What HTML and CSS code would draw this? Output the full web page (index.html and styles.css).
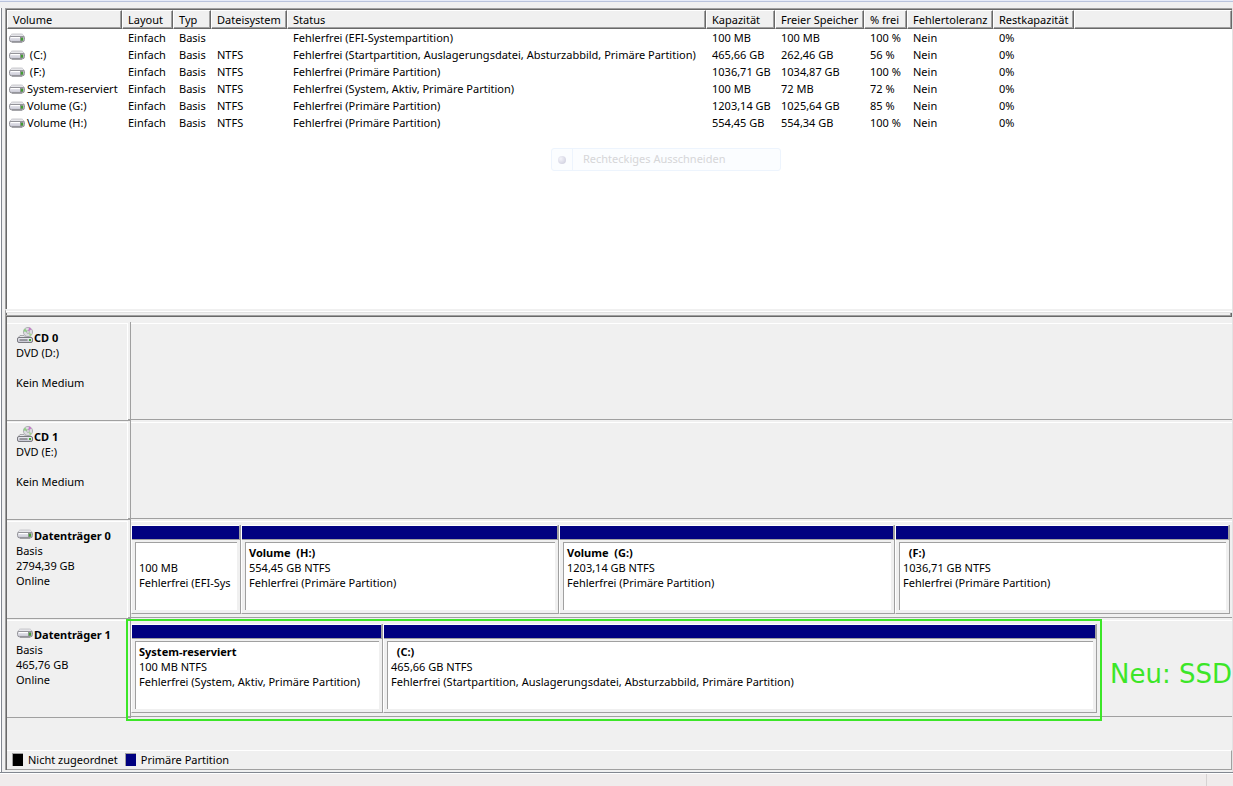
FILE: index.html
```html
<!DOCTYPE html>
<html lang="de">
<head>
<meta charset="utf-8">
<title>Datenträgerverwaltung</title>
<link rel="stylesheet" href="styles.css">
</head>
<body>
<svg class="defs" aria-hidden="true">
  <defs>
    <linearGradient id="face" x1="0" y1="0" x2="0" y2="1">
      <stop offset="0" stop-color="#eeeef4"/>
      <stop offset="1" stop-color="#c4c4d0"/>
    </linearGradient>
    <symbol id="drive" viewBox="0 0 16 10">
      <path d="M3.500 1h9q1 0 1.700 1L15.500 4H.5L1.800 2q.7-1 1.700-1z" fill="#e6e6ea" stroke="#bcbcc2" stroke-width=".8"/>
      <path d="M.5 4.500Q.5 3.500 2 3.500h12q1.500 0 1.500 1v2q0 2.500-2.500 2.500H3Q.5 9 .5 6.500z" fill="url(#face)" stroke="#8a8a90" stroke-width=".9"/>
      <path d="M2 4.500h9" stroke="#fff"/>
      <path d="M3 9h10" stroke="#6e6e74" stroke-width=".8"/>
      <rect x="11" y="4" width="3.500" height="4" fill="#8a948a"/>
      <rect x="12" y="5" width="2" height="2.500" fill="#3f9f30"/>
    </symbol>
    <symbol id="disc" viewBox="0 0 16 16">
      <circle cx="11" cy="5" r="4.600" fill="#dcdce0" stroke="#a2a2a8" stroke-width=".8"/>
      <path d="M11 5 8 1.500a4.500 4.500 0 0 0-1.500 3z" fill="#8fcf84"/>
      <path d="M11 5l1-4.400a4.500 4.500 0 0 1 2.500 1.600z" fill="#c678ca"/>
      <path d="M11 5l4 2.500a4.500 4.500 0 0 1-2 1.800z" fill="#a8d894"/>
      <circle cx="11" cy="5" r="1.300" fill="#fff" stroke="#8c8c92" stroke-width=".7"/>
      <path d="M3 8.500h4l1.500 1.500h5l2 1.500H.5z" fill="#e4e4e8" stroke="#9a9aa0" stroke-width=".8"/>
      <rect x=".5" y="10.500" width="15" height="5" rx="1.500" fill="url(#face)" stroke="#7a7a80"/>
      <path d="M2.500 13h8" stroke="#55555a"/>
      <rect x="12" y="12" width="2" height="2" fill="#3fae2f"/>
    </symbol>
  </defs>
</svg>

<main class="window">
  <section class="volumes">
    <table class="list">
      <colgroup>
        <col class="c-volume"><col class="c-layout"><col class="c-type"><col class="c-fs"><col class="c-status">
        <col class="c-size"><col class="c-free"><col class="c-pct"><col class="c-fault"><col class="c-rest"><col>
      </colgroup>
      <thead>
        <tr><th>Volume</th><th>Layout</th><th>Typ</th><th>Dateisystem</th><th>Status</th><th>Kapazität</th><th>Freier Speicher</th><th>% frei</th><th>Fehlertoleranz</th><th>Restkapazität</th><th></th></tr>
      </thead>
      <tbody>
        <tr><td><span class="name"><svg class="drive"><use href="#drive"/></svg></span></td><td>Einfach</td><td>Basis</td><td></td><td>Fehlerfrei (EFI-Systempartition)</td><td>100 MB</td><td>100 MB</td><td>100 %</td><td>Nein</td><td>0%</td><td></td></tr>
        <tr><td><span class="name"><svg class="drive"><use href="#drive"/></svg>&nbsp;(C:)</span></td><td>Einfach</td><td>Basis</td><td>NTFS</td><td>Fehlerfrei (Startpartition, Auslagerungsdatei, Absturzabbild, Primäre Partition)</td><td>465,66 GB</td><td>262,46 GB</td><td>56 %</td><td>Nein</td><td>0%</td><td></td></tr>
        <tr><td><span class="name"><svg class="drive"><use href="#drive"/></svg>&nbsp;(F:)</span></td><td>Einfach</td><td>Basis</td><td>NTFS</td><td>Fehlerfrei (Primäre Partition)</td><td>1036,71 GB</td><td>1034,87 GB</td><td>100 %</td><td>Nein</td><td>0%</td><td></td></tr>
        <tr><td><span class="name"><svg class="drive"><use href="#drive"/></svg>System-reserviert</span></td><td>Einfach</td><td>Basis</td><td>NTFS</td><td>Fehlerfrei (System, Aktiv, Primäre Partition)</td><td>100 MB</td><td>72 MB</td><td>72 %</td><td>Nein</td><td>0%</td><td></td></tr>
        <tr><td><span class="name"><svg class="drive"><use href="#drive"/></svg>Volume (G:)</span></td><td>Einfach</td><td>Basis</td><td>NTFS</td><td>Fehlerfrei (Primäre Partition)</td><td>1203,14 GB</td><td>1025,64 GB</td><td>85 %</td><td>Nein</td><td>0%</td><td></td></tr>
        <tr><td><span class="name"><svg class="drive"><use href="#drive"/></svg>Volume (H:)</span></td><td>Einfach</td><td>Basis</td><td>NTFS</td><td>Fehlerfrei (Primäre Partition)</td><td>554,45 GB</td><td>554,34 GB</td><td>100 %</td><td>Nein</td><td>0%</td><td></td></tr>
      </tbody>
    </table>
    <button class="snip" type="button"><span class="snip-mark"><span class="dot"></span></span><span class="snip-text">Rechteckiges Ausschneiden</span></button>
  </section>

  <div class="splitter"></div>

  <section class="disks">
    <article class="disk">
      <div class="info"><h2><svg class="disc"><use href="#disc"/></svg>CD 0</h2><p>DVD (D:)</p><p>&nbsp;</p><p>Kein Medium</p></div>
      <div class="graph"></div>
    </article>
    <article class="disk">
      <div class="info"><h2><svg class="disc"><use href="#disc"/></svg>CD 1</h2><p>DVD (E:)</p><p>&nbsp;</p><p>Kein Medium</p></div>
      <div class="graph"></div>
    </article>
    <article class="disk">
      <div class="info"><h2><svg class="drive"><use href="#drive"/></svg>Datenträger 0</h2><p>Basis</p><p>2794,39 GB</p><p>Online</p></div>
      <div class="graph parts-four">
        <div class="part"><div class="bar"></div><div class="box"><h3>&nbsp;</h3><p>100 MB</p><p>Fehlerfrei (EFI-Sys</p></div></div>
        <div class="part"><div class="bar"></div><div class="box"><h3>Volume&nbsp; (H:)</h3><p>554,45 GB NTFS</p><p>Fehlerfrei (Primäre Partition)</p></div></div>
        <div class="part"><div class="bar"></div><div class="box"><h3>Volume&nbsp; (G:)</h3><p>1203,14 GB NTFS</p><p>Fehlerfrei (Primäre Partition)</p></div></div>
        <div class="part"><div class="bar"></div><div class="box"><h3>&nbsp;&nbsp;(F:)</h3><p>1036,71 GB NTFS</p><p>Fehlerfrei (Primäre Partition)</p></div></div>
      </div>
    </article>
    <article class="disk">
      <div class="info"><h2><svg class="drive"><use href="#drive"/></svg>Datenträger 1</h2><p>Basis</p><p>465,76 GB</p><p>Online</p></div>
      <div class="graph parts-two">
        <div class="part"><div class="bar"></div><div class="box"><h3>System-reserviert</h3><p>100 MB NTFS</p><p>Fehlerfrei (System, Aktiv, Primäre Partition)</p></div></div>
        <div class="part"><div class="bar"></div><div class="box"><h3>&nbsp;&nbsp;(C:)</h3><p>465,66 GB NTFS</p><p>Fehlerfrei (Startpartition, Auslagerungsdatei, Absturzabbild, Primäre Partition)</p></div></div>
        <div class="note">Neu: SSD</div>
        <div class="marker"></div>
      </div>
    </article>
  </section>

  <footer class="legend">
    <span class="key"><i class="swatch black"></i>Nicht zugeordnet</span>
    <span class="key"><i class="swatch navy"></i>Primäre Partition</span>
  </footer>
</main>
<div class="status"><div class="grip"></div></div>
</body>
</html>
```
FILE: styles.css
```css
* { box-sizing: border-box; }

body {
  margin: 0;
  min-height: 100vh;
  display: flex;
  flex-direction: column;
  background: #f0f0f0;
  border-top: 1px solid #e6ebf8;
  color: #000;
  font: 11px/15px "Noto Sans", "Open Sans", sans-serif;
}

h2, h3, p { margin: 0; font-size: 11px; line-height: 15px; white-space: nowrap; }
h2, h3 { font-weight: 700; }
.defs { position: absolute; width: 0; height: 0; }
.drive { width: 16px; height: 10px; flex: none; }
.disc { width: 16px; height: 16px; flex: none; }

/* window frame */
.window {
  flex: 1;
  display: flex;
  flex-direction: column;
  padding: 7px 1px 2px 5px;
  background:
    linear-gradient(#b9c3dc, #b9c3dc) top / 100% 1px no-repeat,
    linear-gradient(#828790, #828790) 1px 7px / 1px 100% no-repeat,
    linear-gradient(#fff, #fff) 0 7px / 1px 100% no-repeat,
    linear-gradient(#e3e3e3, #e3e3e3) 100% 7px / 1px 100% no-repeat,
    #f0f0f0;
  border-bottom: 1px solid #828790;
}

/* volume list */
.volumes {
  flex: 1;
  position: relative;
  background: #fff;
  border-top: 1px solid #a0a0a0;
  border-left: 1px solid #a0a0a0;
  box-shadow: inset 1px 1px #696969;
  padding: 1px 0 0 1px;
}
.list { width: 100%; table-layout: fixed; border-collapse: separate; border-spacing: 0; }
.c-volume { width: 115px; }
.c-layout { width: 51px; }
.c-type { width: 38px; }
.c-fs { width: 76px; }
.c-status { width: 419px; }
.c-size { width: 69px; }
.c-free { width: 89px; }
.c-pct { width: 43px; }
.c-fault { width: 86px; }
.c-rest { width: 81px; }
.list th {
  height: 19px;
  padding: 0 0 1px 5px;
  text-align: left;
  font-weight: 400;
  line-height: 15px;
  white-space: nowrap;
  background: #f0f0f0;
  border: solid #696969;
  border-width: 1px;
  border-top-color: #fff;
  border-left-color: #fff;
  box-shadow: inset -1px -1px #a0a0a0;
}
.list td { height: 17px; padding: 0 0 0 6px; line-height: 17px; white-space: nowrap; }
.list td:first-child { padding-left: 2px; }
.name { display: flex; align-items: center; gap: 2px; height: 17px; }

/* capture menu entry fading out over the list */
.snip {
  position: absolute;
  left: 545px;
  top: 139px;
  width: 230px;
  height: 23px;
  display: flex;
  padding: 0;
  border: 1px solid #edf4fd;
  border-radius: 3px;
  background: #fbfdff;
  font: inherit;
  color: #d6d6d8;
}
.snip-mark { width: 21px; height: 100%; display: grid; place-items: center; border-right: 1px solid #edf4fd; }
.dot { width: 8px; height: 8px; border-radius: 50%; background: radial-gradient(circle at 35% 35%, #f4f4fa, #c9c9da); }
.snip-text { padding-left: 10px; line-height: 20px; }

.splitter {
  height: 8px;
  border-top: 2px solid #f0f0f0;
  border-left: 1px solid #a0a0a0;
  background: #f0f0f0;
  box-shadow: inset 0 1px #fff, inset 0 2px #e3e3e3, inset -1px -1px #696969, inset -2px -2px #a0a0a0, inset 1px 0 #696969;
}

/* graphical view */
.disks {
  border-left: 1px solid #a0a0a0;
  box-shadow: inset 1px 0 #696969;
  padding: 5px 0 32px 1px;
}
.disk { display: grid; grid-template-columns: 124px minmax(0, 1fr); height: 99px; }
.info {
  padding: 8px 0 0 9px;
  border-bottom: 1px solid #a0a0a0;
  background:
    linear-gradient(#fff, #fff) 0 1px / 121px 1px no-repeat,
    linear-gradient(#fff, #fff) 120px 1px / 1px 100% no-repeat,
    linear-gradient(#a0a0a0, #a0a0a0) 120px 100% / 4px 1px no-repeat,
    linear-gradient(#a0a0a0, #a0a0a0) 123px 0 / 1px 100% no-repeat;
}
.info h2 { display: flex; height: 15px; align-items: center; gap: 1px; padding-left: 1px; }
.info .disc { align-self: flex-end; margin-bottom: 2px; }
.info .drive { margin-bottom: 4px; }
.graph {
  position: relative;
  display: grid;
  padding: 5px 2px 3px 0;
  border-bottom: 1px solid #a0a0a0;
  margin-bottom: 1px;
  background: linear-gradient(#fff, #fff) 0 1px / 100% 1px no-repeat;
}
.parts-four { grid-template-columns: 110fr 318fr 336fr 335fr; }
.parts-two { grid-template-columns: 252fr 714fr 133fr; }
.part {
  min-width: 0;
  height: 89px;
  display: flex;
  flex-direction: column;
  border-left: 1px solid #fff;
  border-right: 1px solid #a0a0a0;
  border-bottom: 1px solid #a0a0a0;
}
.bar { height: 15px; background: #000080; border-top: 1px solid #fff; border-right: 1px solid #a0a0a0; border-bottom: 1px solid #a0a0a0; }
.box {
  flex: 1;
  margin: 2px 3px 3px;
  padding: 2px 0 0 3px;
  overflow: hidden;
  background: #fff;
  border-top: 1px solid #a0a0a0;
  border-left: 1px solid #a0a0a0;
}
.note {
  align-self: center;
  min-width: 0;
  padding: 10px 0 0 13px;
  white-space: nowrap;
  color: #3ce628;
  font: 26px/30px "DejaVu Sans", sans-serif;
}
.marker {
  position: absolute;
  top: 0;
  bottom: -5px;
  left: -5px;
  width: calc((100% - 2px) * 966 / 1099 + 10px);
  border: 2px solid #3ce628;
}

/* legend and status line */
.legend {
  display: flex;
  align-items: center;
  gap: 7px;
  height: 20px;
  margin-left: 2px;
  padding: 0 0 1px 5px;
  border-top: 1px solid #fff;
  border-right: 1px solid #a0a0a0;
  border-bottom: 1px solid #a0a0a0;
  box-shadow: -1px 0 #696969, -2px 0 #a0a0a0;
}
.key { display: flex; align-items: center; gap: 5px; }
.swatch { width: 11px; height: 13px; border-top: 1px solid #a0a0a0; border-left: 1px solid #a0a0a0; }
.black { background: #000; }
.navy { background: #000080; }
.status { height: 13px; border-top: 1px solid #fff; background: #f0ecec; display: flex; justify-content: flex-end; }
.grip { width: 27px; border-left: 1px solid #d6d2d2; }
```
